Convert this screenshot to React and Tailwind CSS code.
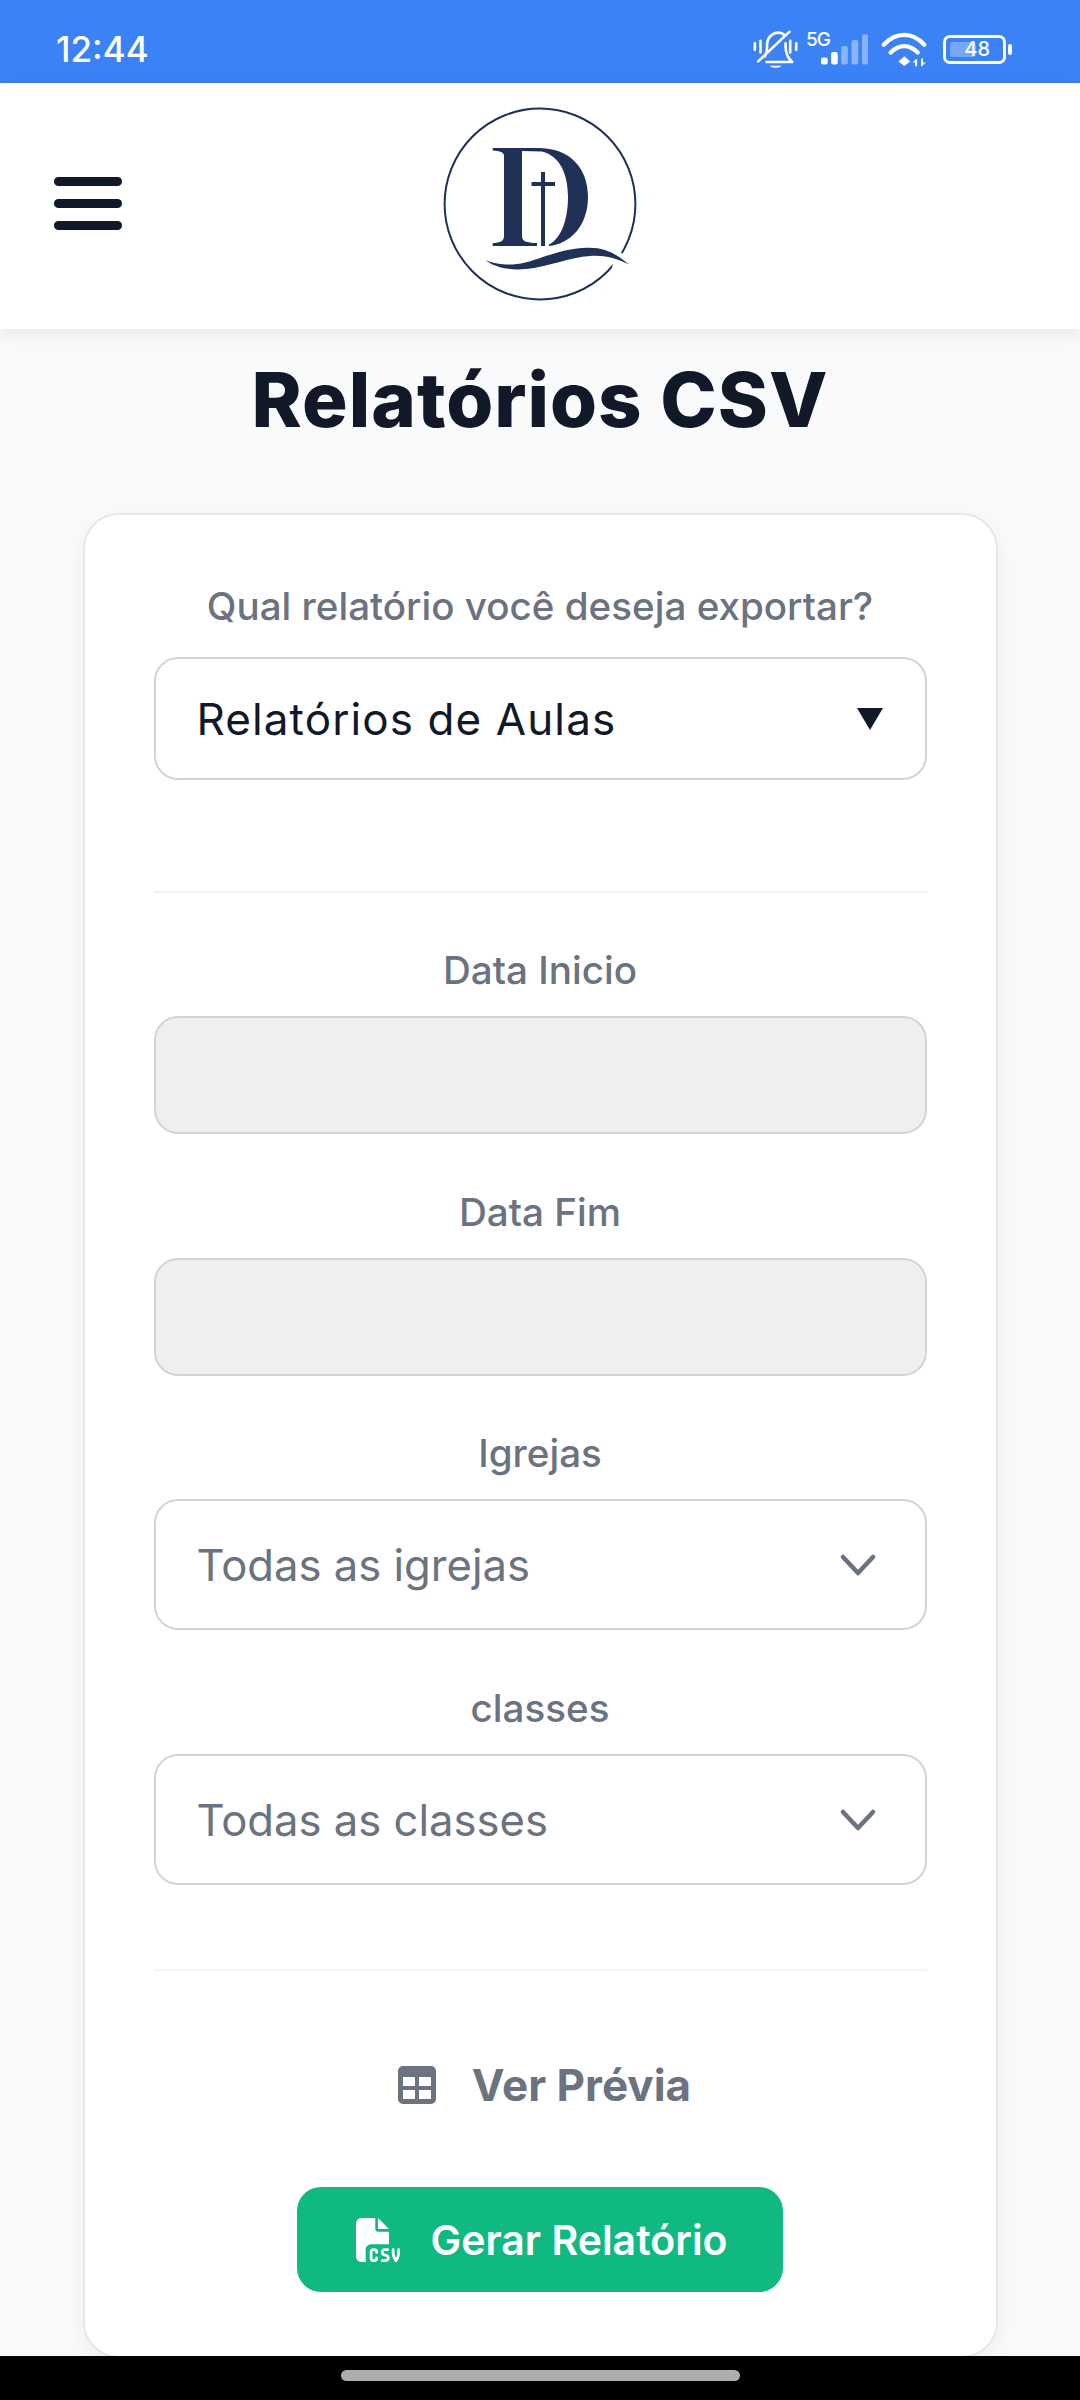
import React from "react";
import { FaFileCsv } from "react-icons/fa6";

const inter = "[font-family:Inter,sans-serif]";

function Chevron() {
  return (
    <svg width="38" height="24" viewBox="0 0 38 24" fill="none" stroke="#6b7280" strokeWidth="4.5" strokeLinecap="round" strokeLinejoin="round">
      <path d="M4 4 L19 20 L34 4" />
    </svg>
  );
}

function StatusIcons() {
  return (
    <div className="flex items-center">
      <svg width="45" height="38" viewBox="100 60 135 115" fill="none" stroke="white" strokeWidth="8" strokeLinecap="round" strokeLinejoin="round" className="mr-[8px]">
        <path d="M105 100v20M122 93v35M230 100v20M212 93v35" />
        <path d="M135 140C142 130 142 115 142 105C142 83 158 68 176 68C184 68 190 71 196 76" />
        <path d="M198 100V110C198 130 205 145 218 157H140" />
        <path d="M115 155L210 65" />
        <path d="M150 168H186C182 176 154 176 150 168Z" fill="white" stroke="none" />
      </svg>
      <div className="relative w-[61px] h-[34px] mr-[14px]">
        <span className={`absolute left-0 top-[-2px] text-[19px] leading-[20px] font-medium tracking-[-1px] text-white ${inter}`}>5G</span>
        <svg width="47" height="33" viewBox="305 70 140 97" className="absolute left-[15px] top-[1px]" fill="white">
          <rect x="305" y="142" width="20" height="21" rx="6" />
          <rect x="335" y="126" width="20" height="37" rx="6" />
          <rect x="365" y="108" width="20" height="55" rx="6" fillOpacity="0.4" />
          <rect x="396" y="90" width="20" height="73" rx="6" fillOpacity="0.4" />
          <rect x="427" y="73" width="18" height="90" rx="6" fillOpacity="0.4" />
        </svg>
      </div>
      <svg width="46" height="35" viewBox="484 65 140 107" fill="none" stroke="white" strokeWidth="13" strokeLinecap="round" className="mr-[16px]">
        <path d="M492 104C530 64 580 64 616 104" />
        <path d="M513 128C540 102 570 102 596 128" />
        <path d="M555 139L573 155L555 169L537 155Z" fill="white" stroke="none" />
        <path d="M590 148L580 158H588V170H594V148Z" fill="white" stroke="none" />
        <path d="M606 146H612V158H620L609 170H606Z" fill="white" stroke="none" />
      </svg>
      <div className="flex items-center">
        <div className={`relative w-[63px] h-[29px] rounded-[7px] border-[3px] border-white text-white flex items-center justify-end pr-[13px] text-[20px] leading-none font-medium ${inter}`}>
          <div className="absolute left-[4px] top-[4px] bottom-[4px] w-[26px] rounded-[3px] bg-white/30" />
          <span className="relative">48</span>
        </div>
        <div className="ml-[2px] w-[4px] h-[11px] rounded-full bg-white" />
      </div>
    </div>
  );
}

function Logo() {
  return (
    <svg width="240" height="240" viewBox="0 0 240 240">
      <circle cx="120" cy="114" r="95.4" fill="none" stroke="#1f3157" strokeWidth="2" />
      <path fill="white" d="M196 158 L212 172 L192 178 Z" />
      <path fill="#1f3157" d="M72.7 58H118C150 58 168 78 168 107C168 136 150 154 129 156L129 154.5C142 148 148 128 148 107C148 84 140 66 122 61.5L102 61V146C102 151 106 153 117 153V156H72.7V153C80 153 84 151 84 146V66C84 62 80 61 72.7 60.5Z" />
      <rect x="121" y="82" width="4" height="74" fill="#1f3157" />
      <rect x="111.5" y="92" width="23.5" height="4" fill="#1f3157" />
      <path fill="#1f3157" d="M65 170C78 175 88 175 97 174C115 172 135 160 162 158C184 156 195 163 209 174.5C196 168 184 165 170 166C150 167 128 177 106 179C90 180.5 76 178 65 170Z" />
    </svg>
  );
}

function Label({ children, className = "" }) {
  return <div className={`text-center text-[38.6px] leading-[48px] font-medium text-[#6b7280] ${inter} ${className}`}>{children}</div>;
}

function DisabledInput() {
  return <div className="h-[118px] rounded-[24px] border-2 border-[#d1d5db] bg-[#efefef]" />;
}

function Select({ text }) {
  return (
    <div className="h-[131px] rounded-[24px] border-2 border-[#d1d5db] bg-white flex items-center justify-between pl-[41px] pr-[48px]">
      <span className={`pt-[2px] text-[43.6px] text-[#6b7280] ${inter}`}>{text}</span>
      <Chevron />
    </div>
  );
}

export default function App() {
  return (
    <div className={`relative w-[1080px] h-[2400px] overflow-hidden bg-[#f9fafb] ${inter}`}>
      <div className="h-[83px] bg-[#3b82f6] flex items-center justify-between pl-[56px] pr-[68px] pt-[15px]">
        <span className="text-[35px] font-medium text-white">12:44</span>
        <StatusIcons />
      </div>
      <header className="relative h-[246px] bg-white flex items-start justify-center pt-[7px] shadow-[0_6px_18px_rgba(0,0,0,0.07)]">
        <div className="absolute left-[54px] top-[94px] flex flex-col gap-[13px]">
          <div className="w-[68px] h-[9px] rounded-full bg-[#111827]" />
          <div className="w-[68px] h-[9px] rounded-full bg-[#111827]" />
          <div className="w-[68px] h-[9px] rounded-full bg-[#111827]" />
        </div>
        <Logo />
      </header>
      <main className="flex flex-col items-center">
        <h1 className="mt-[30px] h-[80px] leading-[80px] text-[76px] font-extrabold text-[#111827] [font-family:Inter,sans-serif] tracking-[1px]">Relatórios CSV</h1>
        <section className="mt-[74px] w-[915px] h-[1845px] rounded-[36px] border-2 border-[#e5e7eb] bg-white shadow-[0_8px_24px_rgba(0,0,0,0.05)] px-[69px] pt-[67px]">
          <Label className="h-[75px]">Qual relatório você deseja exportar?</Label>
          <div className="h-[123px] rounded-[24px] border-2 border-[#d1d5db] bg-white flex items-center justify-between pl-[41px] pr-[42px]">
            <span className="text-[44px] tracking-[1.1px] text-[#111827] [font-family:Inter,sans-serif]">Relatórios de Aulas</span>
            <svg width="26" height="24" viewBox="0 0 26 24" fill="#111827"><path d="M0 1 H26 L13 23 Z" /></svg>
          </div>
          <div className="mt-[111px] h-[2px] bg-[#f3f4f6]" />
          <Label className="mt-[53px] mb-[22px]">Data Inicio</Label>
          <DisabledInput />
          <Label className="mt-[54px] mb-[22px]">Data Fim</Label>
          <DisabledInput />
          <Label className="mt-[53px] mb-[22px]">Igrejas</Label>
          <Select text="Todas as igrejas" />
          <Label className="mt-[54px] mb-[22px]">classes</Label>
          <Select text="Todas as classes" />
          <div className="mt-[84px] h-[2px] bg-[#f3f4f6]" />
          <div className="mt-[89px] pl-[9px] flex items-center justify-center gap-[36px] text-[#6b7280]">
            <svg width="38" height="38" viewBox="0 0 38 38">
              <path fill="#6b7280" fillRule="evenodd" d="M5 0h28a5 5 0 0 1 5 5v28a5 5 0 0 1-5 5H5a5 5 0 0 1-5-5V5a5 5 0 0 1 5-5z M5 11v9h12v-9z M21 11v9h12v-9z M5 24v9h12v-9z M21 24v9h12v-9z" />
            </svg>
            <span className="text-[44px] leading-[50px] font-bold">Ver Prévia</span>
          </div>
          <div className="mt-[77px] flex justify-center">
            <div className="w-[486px] h-[105px] rounded-[24px] bg-[#10b981] flex items-center justify-center gap-[30px] pl-[4px] text-white">
              <FaFileCsv size={44} />
              <span className="pt-[2px] text-[41px] font-semibold">Gerar Relatório</span>
            </div>
          </div>
        </section>
      </main>
      <div className="absolute left-0 right-0 bottom-0 h-[44px] bg-black flex justify-center pt-[14px]">
        <div className="w-[399px] h-[11px] rounded-full bg-[#adadad]" />
      </div>
    </div>
  );
}
